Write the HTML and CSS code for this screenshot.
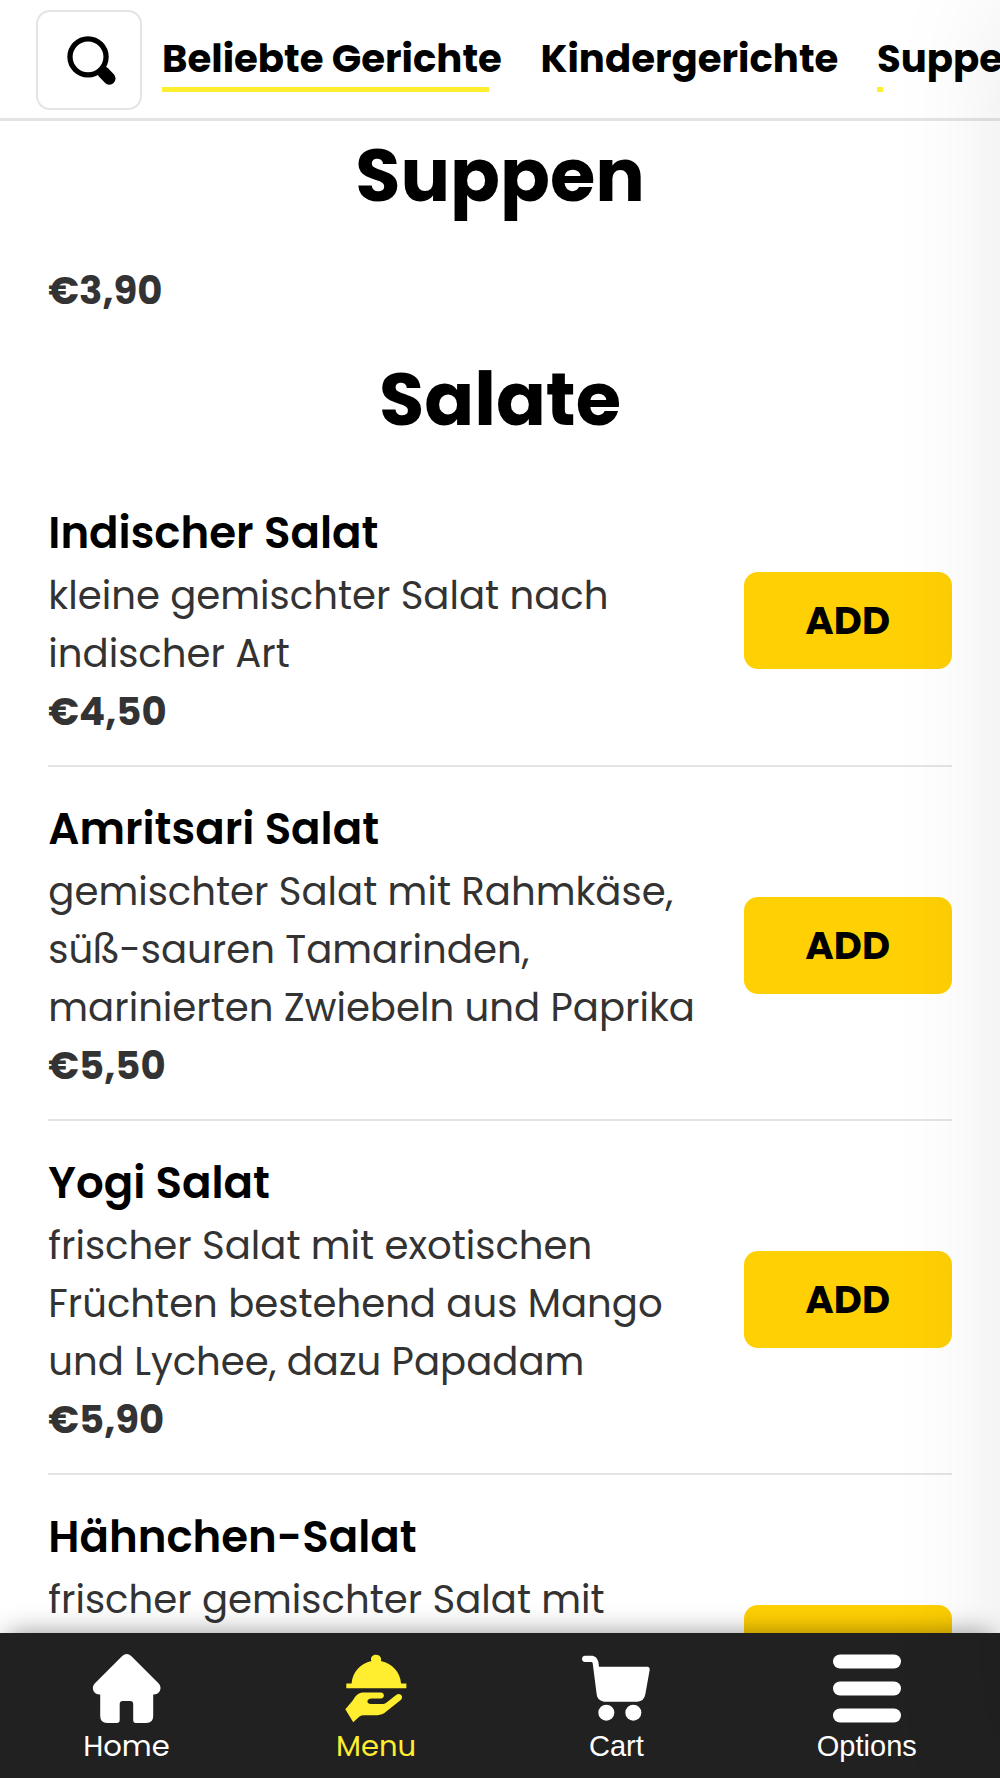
FILE: index.html
```html
<!DOCTYPE html>
<html lang="de">
<head>
<meta charset="utf-8">
<title>Speisekarte</title>
<link rel="stylesheet" href="styles.css">
</head>
<body>
<header class="topbar">
  <button class="search" aria-label="Suche">
    <svg class="search-icon" viewBox="142 107 147 148"><circle cx="205" cy="170" r="54.5" fill="none" stroke="#000" stroke-width="16"/><path d="M252 217L269.500 235.500" stroke="#000" stroke-width="37" stroke-linecap="round"/></svg>
  </button>
  <nav class="tabs">
    <a class="tab">Beliebte Gerichte<span class="bar bar-full"></span></a>
    <a class="tab">Kindergerichte</a>
    <a class="tab">Suppen<span class="bar bar-start"></span></a>
  </nav>
</header>

<main class="menu">
  <h2 class="category category-soups">Suppen</h2>
  <p class="price price-lone">€3,90</p>
  <h2 class="category category-salads">Salate</h2>
  <section class="items">
    <article class="item">
      <div class="info">
        <h3 class="name">Indischer Salat</h3>
        <p class="desc">kleine gemischter Salat nach<br>indischer Art</p>
        <p class="price">€4,50</p>
      </div>
      <button class="add">ADD</button>
    </article>
    <article class="item">
      <div class="info">
        <h3 class="name">Amritsari Salat</h3>
        <p class="desc">gemischter Salat mit Rahmkäse,<br>süß-sauren Tamarinden,<br>marinierten Zwiebeln und Paprika</p>
        <p class="price">€5,50</p>
      </div>
      <button class="add">ADD</button>
    </article>
    <article class="item">
      <div class="info">
        <h3 class="name">Yogi Salat</h3>
        <p class="desc">frischer Salat mit exotischen<br>Früchten bestehend aus Mango<br>und Lychee, dazu Papadam</p>
        <p class="price">€5,90</p>
      </div>
      <button class="add">ADD</button>
    </article>
    <article class="item item-last">
      <div class="info">
        <h3 class="name">Hähnchen-Salat</h3>
        <p class="desc">frischer gemischter Salat mit</p>
      </div>
      <div class="add"></div>
    </article>
  </section>
</main>

<footer class="dock">
  <a class="dock-item dock-home">
    <svg class="icon" viewBox="-0.7 0 68 69"><path d="M29.500 2Q34-2 38.500 2L66 29.500C70 34 67 40.500 61 40.500H60.500V62Q60.500 69 53.500 69H43Q40.500 69 40.500 66V50Q40.500 47 37.500 47H30Q27 47 27 50V66Q27 69 24 69H14.500Q7.500 69 7.500 62V40.500H7C1 40.500-2 34 2 29.500Z"/></svg>
    <span>Home</span>
  </a>
  <a class="dock-item dock-menu">
    <svg class="icon" viewBox="125 43 206 204"><path d="M138 130H154C157 95 180 70 214 62C210 50 218 43 228 43C239 43 246 52 243 62C278 70 301 95 304 130H320V144H138Z"/><path d="M135 208L157 182Q170 158 186 157H243C255 157 255 175 243 175H215C198 175 198 192 213 192H250Q255 192 262 186L290 164C300 156 314 168 303 180L263 212Q248 226 232 226H192Q183 226 178 230L159 247Z"/></svg>
    <span>Menu</span>
  </a>
  <a class="dock-item">
    <svg class="icon" viewBox="246 223 204 207"><path d="M255 228H278Q290 230 295 246L297 261H442Q450 262 449 271L436 344Q432 366 412 366H312Q292 364 290 344L278 250Q277 247 274 247H255C243 246 243 229 255 228Z"/><circle cx="319" cy="399" r="24"/><circle cx="400" cy="399" r="24"/></svg>
    <span>Cart</span>
  </a>
  <a class="dock-item">
    <svg class="icon" viewBox="0 0 68 69"><rect y="0.500" width="68" height="14" rx="7"/><rect y="27.500" width="68" height="14" rx="7"/><rect y="54.500" width="68" height="14" rx="7"/></svg>
    <span>Options</span>
  </a>
</footer>
<aside class="drawer"></aside>
</body>
</html>
```
FILE: styles.css
```css
* { box-sizing: border-box; }

body {
  margin: 0;
  height: 1778px;
  display: flex;
  flex-direction: column;
  position: relative;
  overflow: hidden;
  background: #fff;
  color: #000;
  font-family: Poppins, Inter, "Open Sans", sans-serif;
}

h2, h3, p { margin: 0; }
button { font: inherit; color: inherit; }

/* Top bar */
.topbar {
  flex: none;
  display: flex;
  align-items: flex-start;
  gap: 20px;
  height: 121px;
  padding: 10px 0 0 36px;
  overflow: hidden;
  border-bottom: 3px solid #e4e4e4;
}
.search {
  flex: none;
  width: 106px;
  height: 100px;
  padding: 0 0 0 4px;
  display: flex;
  align-items: center;
  justify-content: center;
  background: #fff;
  border: 2px solid #e4e4e4;
  border-radius: 14px;
}
.search-icon { width: 49px; height: 49px; }
.tabs { display: flex; gap: 38.65px; padding-top: 19px; }
.tab {
  flex: none;
  font-size: 38.65px;
  font-weight: 700;
  line-height: 58px;
  padding-top: 1px;
  white-space: nowrap;
}
.bar { display: block; height: 5px; margin-top: -1px; background: #ffed2f; }
.bar-full { width: 327px; }
.bar-start { width: 6px; }

/* Menu list */
.menu { flex: 1; min-height: 0; overflow: hidden; padding: 0 48.3px; }
.category {
  font-size: 73.6px;
  font-weight: 700;
  line-height: 106px;
  text-align: center;
}
.category-soups { margin-top: 2.2px; }
.category-salads { margin-top: 26.6px; }
.price {
  font-size: 38.65px;
  font-weight: 700;
  line-height: 57.97px;
  color: #333;
}
.price-lone { margin-top: 33px; }
.items { margin-top: 18.2px; }
.item {
  display: flex;
  align-items: center;
  justify-content: space-between;
  padding: 29.3px 0 23.9px;
  border-bottom: 2px solid #e4e4e4;
}
.item-last { height: 354px; align-items: flex-start; }
.item-last .add { margin-top: 101px; }
.info { white-space: nowrap; }
.name {
  font-size: 43.48px;
  font-weight: 600;
  line-height: 66.8px;
}
.desc { font-size: 38.65px; line-height: 57.97px; color: #333; }
.add {
  flex: none;
  width: 208px;
  height: 97px;
  padding: 0;
  border: 0;
  border-radius: 14px;
  background: #ffd003;
  font-size: 38.65px;
  font-weight: 700;
}

/* Bottom dock */
.dock {
  flex: none;
  position: relative;
  display: flex;
  justify-content: space-around;
  height: 145px;
  padding-top: 21px;
  background: #212121;
  color: #fff;
  box-shadow: 0 -8px 24px -8px rgba(0, 0, 0, .42);
}
.dock-item {
  display: flex;
  flex-direction: column;
  align-items: center;
  font: 29px/43px "Liberation Sans", Arial, sans-serif;
}
.dock-item span { margin-top: 2px; }
.dock-home, .dock-menu { font-family: Poppins, Inter, sans-serif; }
.dock-menu { color: #ffed2f; }
.icon { width: 68px; height: 69px; fill: currentColor; overflow: visible; }

/* Closed side drawer, its shadow falls on the page */
.drawer {
  position: absolute;
  top: 0;
  left: 100%;
  width: 600px;
  height: 100%;
  background: #fff;
  box-shadow: 0 0 110px rgba(0, 0, 0, .085);
}
```
